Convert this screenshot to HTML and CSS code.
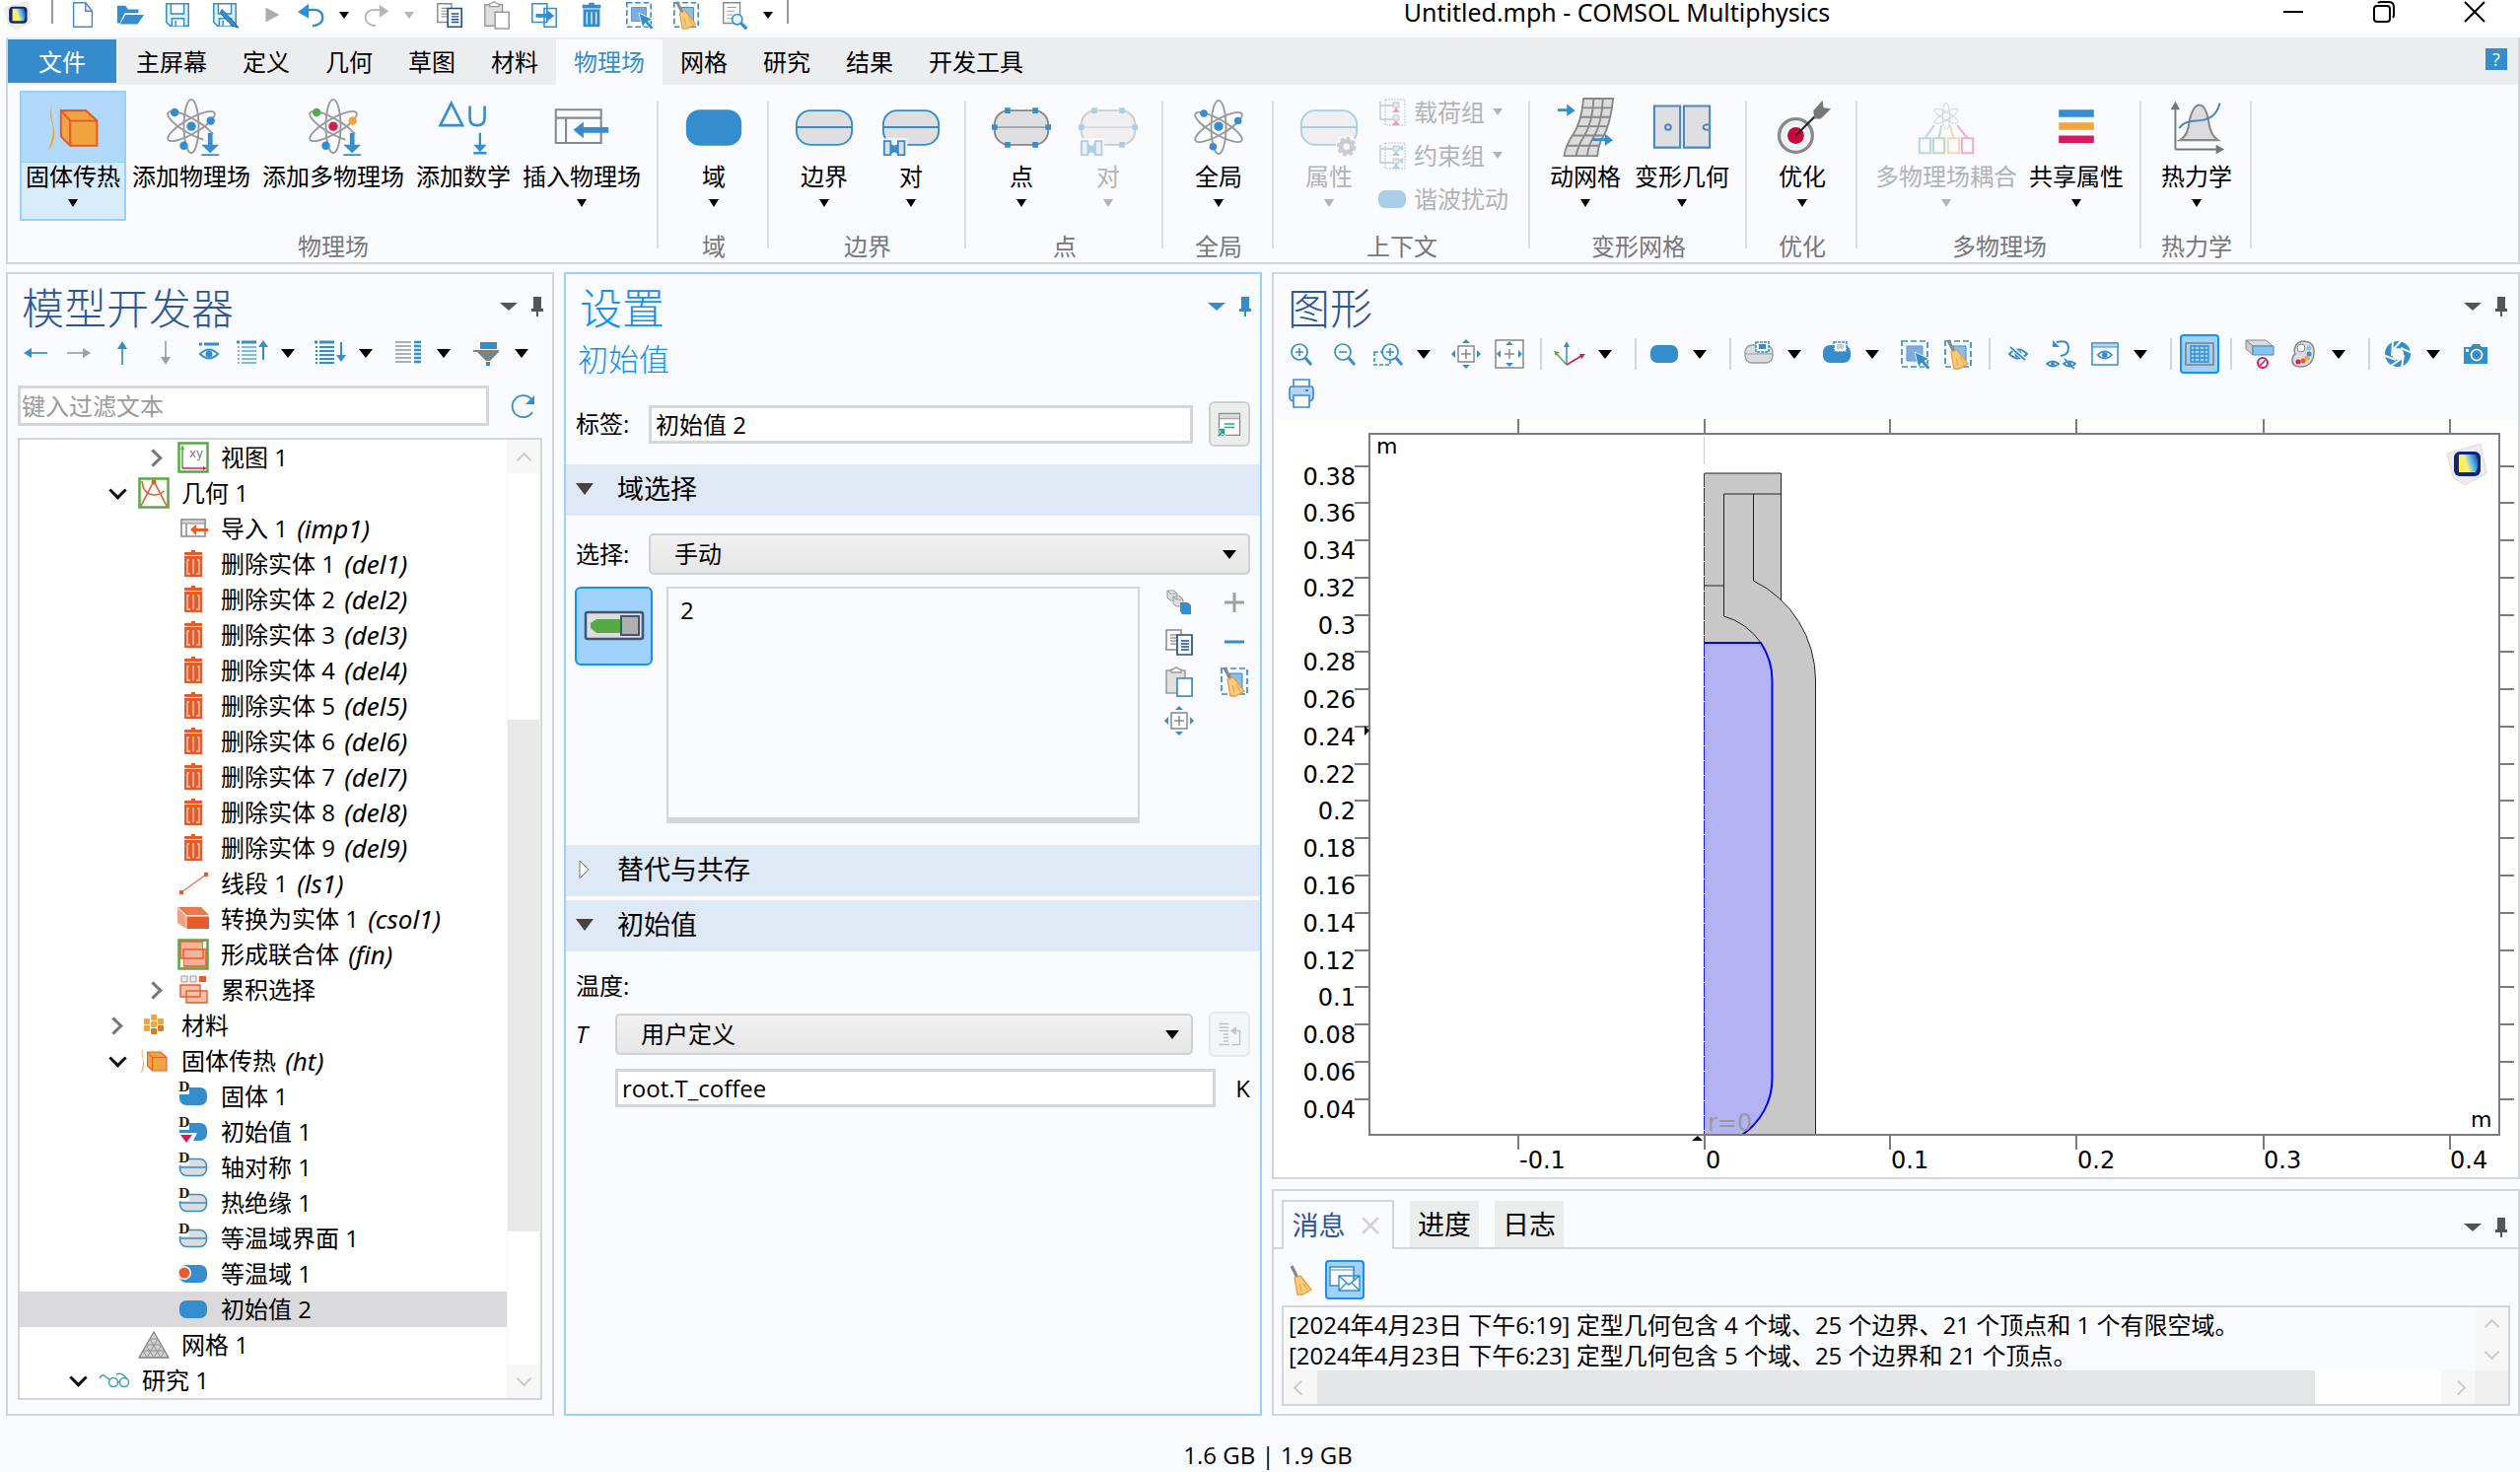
FILE: index.html
```html
<!DOCTYPE html>
<html lang="zh-CN">
<head>
<meta charset="utf-8">
<title>Untitled.mph - COMSOL Multiphysics</title>
<link rel="stylesheet" href="styles.css">
</head>
<body>
<svg class="sprite" aria-hidden="true">
  <defs>
    <linearGradient id="logoFill" x1="0" y1="0.3" x2="1" y2="0">
      <stop offset="0" stop-color="#fff04a"/><stop offset="0.3" stop-color="#f4f08a"/><stop offset="0.6" stop-color="#58b8e8"/><stop offset="1" stop-color="#1238a8"/>
    </linearGradient>
  </defs>
</svg>
<svg class="symbols" aria-hidden="true">
  <symbol id="logo" viewBox="0 0 44 44"><path d="M2 12 36 2l6 30-22 12L8 36z" fill="#ededed" stroke="#dadada"/><rect x="9" y="10" width="27" height="25" rx="6" fill="#10257e"/><path d="M14 13h17q5 9 0 18H14z" fill="url(#logoFill)"/></symbol>
  <symbol id="new" viewBox="0 0 32 32"><path d="M6 3h13l7 9v17H6zM19 3v9h7" fill="#fff" stroke="#4a86c4" stroke-width="1.5"/></symbol>
  <symbol id="open" viewBox="0 0 32 32"><path d="M2 6h9l3 4h11v4H10L5 25H2z M11 16h20l-7 10H5z" fill="#348dcd"/></symbol>
  <symbol id="save" viewBox="0 0 32 32"><path d="M4 4h24v24H8l-4-4z" fill="#dff0fc" stroke="#348dcd" stroke-width="1.6"/><path d="M9 4h14v11H9zM10 28v-8h13v8M14 22v6" fill="#fff" stroke="#348dcd" stroke-width="1.6"/></symbol>
  <symbol id="saveas" viewBox="0 0 32 32"><use href="#save"/><path d="m13 10 14 15 4 5-7-2-13-14z" fill="#348dcd" stroke="#1e68ab"/></symbol>
  <symbol id="play" viewBox="0 0 32 32"><path d="M9 8v16l15-8z" fill="#adadad"/></symbol>
  <symbol id="undo" viewBox="0 0 32 32"><path d="M8 12q20-5 20 7 0 8-11 9" fill="none" stroke="#348dcd" stroke-width="2.6"/><path d="m1 13 12-9v16z" fill="#348dcd"/></symbol>
  <symbol id="redo" viewBox="0 0 32 32"><path d="M24 12q-20-5-20 7 0 8 11 9" fill="none" stroke="#b4b4b4" stroke-width="2"/><path d="m29 12-10-7v14z" fill="#b4b4b4"/></symbol>
  <symbol id="copy" viewBox="0 0 32 32"><path d="M3 4h15v20H3z" fill="#fff" stroke="#888" stroke-width="1.5"/><path d="M7 9h8M7 12h8M7 15h8M7 18h8" stroke="#999" stroke-width="1.3"/><path d="M14 9h15v20H14z" fill="#fff" stroke="#1f4f8f" stroke-width="1.7"/><path d="M18 15h8M18 18h8M18 21h8M18 24h8" stroke="#1f4f8f" stroke-width="1.5"/></symbol>
  <symbol id="paste" viewBox="0 0 32 32"><path d="M3 5h19v23H3z" fill="#dfdfe0" stroke="#9a9a9a" stroke-width="1.5"/><path d="M8 7V4h2q3-4 6 0h2v3z" fill="#fff" stroke="#9a9a9a" stroke-width="1.3"/><path d="M14 13h15v18H14z" fill="#fff" stroke="#9a9a9a" stroke-width="1.6"/></symbol>
  <symbol id="pasteblue" viewBox="0 0 32 32"><use href="#paste"/><path d="M14 13h15v18H14z" fill="#fff" stroke="#348dcd" stroke-width="1.6"/></symbol>
  <symbol id="dup" viewBox="0 0 32 32"><path d="M3 4h16v20H3zM16 9h13v20H16z" fill="#fff" stroke="#348dcd" stroke-width="1.6"/><path d="M7 15h11v-5l9 7-9 7v-5H7z" fill="#348dcd"/></symbol>
  <symbol id="trash" viewBox="0 0 32 32"><path d="M13 3h6v2h7v4H6V5h7z" fill="#348dcd"/><path d="M7 10h18v19H7z" fill="#348dcd"/><path d="M11 13v13M16 13v13M21 13v13" stroke="#e4f1fa" stroke-width="1.5"/></symbol>
  <symbol id="selbox" viewBox="0 0 32 32"><path d="M3 3h26v26H3z" fill="none" stroke="#348dcd" stroke-width="1.7" stroke-dasharray="6 3"/><path d="M8 8h16v15H8z" fill="#7eaee0" stroke="#5c93cf"/><path d="m16 14 15 7-5 2 6 7-3 2-6-7-3 5z" fill="#348dcd" stroke="#fff" stroke-width=".8"/></symbol>
  <symbol id="broomonly" viewBox="0 0 32 32"><path d="m6 2 6 12" stroke="#888" stroke-width="3.2"/><path d="m9 14 6-2 11 14-9 5H12z" fill="#fecb82" stroke="#ef9d30" stroke-width="1.3"/><path d="m14 20 2 8m2-9 4 7" stroke="#ef9d30"/></symbol>
  <symbol id="broom" viewBox="0 0 32 32"><path d="M3 3h26v26H3z" fill="none" stroke="#348dcd" stroke-width="1.7" stroke-dasharray="6 3"/><path d="M11 8h13v15H11z" fill="#86c0ea" stroke="#348dcd"/><use href="#broomonly"/></symbol>
  <symbol id="docfind" viewBox="0 0 32 32"><path d="M5 3h18v22H5z" fill="#fff" stroke="#888" stroke-width="1.5"/><path d="M9 8h10M9 12h8M9 16h6M9 20h5" stroke="#999" stroke-width="1.3"/><circle cx="20" cy="21" r="5.5" fill="#e6f3fd" stroke="#348dcd" stroke-width="1.7"/><path d="m24 25 6 6" stroke="#348dcd" stroke-width="3.5"/></symbol>
  <symbol id="left" viewBox="0 0 32 32"><path d="M8 16h20" stroke="#348dcd" stroke-width="1.7"/><path d="m4 16 8-5v10z" fill="#348dcd"/></symbol>
  <symbol id="right" viewBox="0 0 32 32"><path d="M4 16h20" stroke="#a0a0a0" stroke-width="1.7"/><path d="m28 16-8-5v10z" fill="#a0a0a0"/></symbol>
  <symbol id="up" viewBox="0 0 32 32"><path d="M16 8v20" stroke="#348dcd" stroke-width="1.7"/><path d="m16 4-5 8h10z" fill="#348dcd"/></symbol>
  <symbol id="down" viewBox="0 0 32 32"><path d="M16 4v20" stroke="#a0a0a0" stroke-width="1.7"/><path d="m16 28-5-8h10z" fill="#a0a0a0"/></symbol>
  <symbol id="eye" viewBox="0 0 32 32"><path d="M7 15q9-9 18 0-9 9-18 0z" fill="none" stroke="#348dcd" stroke-width="2"/><circle cx="16" cy="15" r="3.5" fill="#348dcd"/></symbol>
  <symbol id="eyebar" viewBox="0 0 32 32"><path d="M6 7h3M11 7h15" stroke="#348dcd" stroke-width="3"/><g transform="translate(0 2)"><use href="#eye"/></g></symbol>
  <symbol id="listup" viewBox="0 0 32 32"><path d="M0 5h3M5 5h15" stroke="#348dcd" stroke-width="3"/><path d="M1 10h2M5 10h15M1 14h2M5 14h15M1 18h2M5 18h15M1 22h2M5 22h15M1 26h2M5 26h15" stroke="#7dbbe8" stroke-width="2"/><path d="M27 9v14" stroke="#348dcd" stroke-width="2"/><path d="m27 3-5 7h10z" fill="#348dcd"/></symbol>
  <symbol id="listdown" viewBox="0 0 32 32"><path d="M0 5h3M5 5h15" stroke="#348dcd" stroke-width="3"/><path d="M1 10h2M5 10h15M1 14h2M5 14h15M1 18h2M5 18h15M1 22h2M5 22h15M1 26h2M5 26h15" stroke="#348dcd" stroke-width="2"/><path d="M27 5v14" stroke="#348dcd" stroke-width="2"/><path d="m27 25-5-7h10z" fill="#348dcd"/></symbol>
  <symbol id="cols" viewBox="0 0 32 32"><path d="M3 5h16M3 9h16M3 13h16M3 17h16M3 21h16M3 25h16" stroke="#b0b0b0" stroke-width="2"/><path d="M22 5h7M22 9h7M22 13h7M22 17h7M22 21h7M22 25h7" stroke="#348dcd" stroke-width="2.4"/></symbol>
  <symbol id="filter" viewBox="0 0 32 32"><path d="M10 5h17v7H10z" fill="#348dcd"/><path d="M3 13h26v2l-9 9h-4l-9-9H3z" fill="#808184"/><path d="M16 25h4v4h-4z" fill="#348dcd"/></symbol>
  <symbol id="reload" viewBox="0 0 32 32"><path d="M25 9A11 11 0 1 0 26 22" fill="none" stroke="#348dcd" stroke-width="1.8"/><path d="M28 5v9h-9z" fill="#348dcd"/></symbol>
  <symbol id="pin" viewBox="0 0 16 24"><path d="M4 2h8v12h2v3H2v-3h2z" fill="currentColor"/><path d="M8 17v5" stroke="currentColor" stroke-width="2"/></symbol>

  <symbol id="view" viewBox="0 0 32 32"><path d="M1.500 1.500h29v29h-29z" fill="#fff" stroke="#56a946" stroke-width="2.500"/><path d="M5 27V6" stroke="#56a946" stroke-width="1.500"/><path d="m5 3-2 5h4z" fill="#56a946"/><path d="M5 27h22" stroke="#d81b60" stroke-width="1.500"/><path d="m30 27-4-2v4z" fill="#d81b60"/><text x="12" y="16" font-family="DejaVu Sans" font-size="12" fill="#777">xy</text></symbol>
  <symbol id="geom" viewBox="0 0 32 32"><path d="M1.500 1.500h29v29h-29z" fill="#fff" stroke="#56a946" stroke-width="2.500"/><path d="m3 29 13-25 13 25M4 4q1 13 12 14 8 0 10-4" fill="none" stroke="#e55c2c" stroke-width="1.600"/><circle cx="16" cy="5" r="2.500" fill="#e55c2c"/></symbol>
  <symbol id="imp" viewBox="0 0 32 32"><path d="M4 7h24v17H4z" fill="#fff" stroke="#888" stroke-width="1.600"/><path d="M4 7h24v4H4z" fill="#d5d5d5" stroke="#888"/><path d="M9 11v13" stroke="#888" stroke-width="1.500"/><path d="m13 17 6-5v4h12v3H19v4z" fill="#e55c2c"/></symbol>
  <symbol id="del" viewBox="0 0 32 32"><path d="M14 2h4v2h7v3H7V4h7zM7 8h18v21H7z" fill="#e55c2c"/><path d="M12 12h-2v14h3M16 11v15M20 12h2v14h-3" fill="none" stroke="#fbd3c2" stroke-width="1.300"/></symbol>
  <symbol id="line" viewBox="0 0 32 32"><path d="M4 25 29 7" stroke="#e9794f" stroke-width="1.500"/><path d="M2 23h4v4H2zM27 5h4v4h-4z" fill="#e55c2c"/></symbol>
  <symbol id="solid" viewBox="0 0 32 32"><path d="M0 4h24l8 8H9z" fill="#e9794f"/><path d="M0 4l9 9v13l-9-6z" fill="#f1a285"/><path d="M9 13h23v13H9z" fill="#e55c2c"/><path d="m0 4 9 9h23M9 13v13" fill="none" stroke="#fbd3c2" stroke-width="1.300"/></symbol>
  <symbol id="union" viewBox="0 0 32 32"><path d="M1.500 1.500h29v29h-29z" fill="#f9c7b2" stroke="#56a946" stroke-width="2.500"/><path d="M3 3h23v17H3zM6 11h23v17H6z" fill="#f3a98b" fill-opacity=".7" stroke="#e55c2c" stroke-width="1.400"/><path d="M26 3h3v7h-3zM3 21h3v8H3z" fill="#fff"/></symbol>
  <symbol id="cumul" viewBox="0 0 32 32"><path d="M4 2h6v6H4zM13 2h6v6h-6z" fill="#eee" stroke="#999"/><path d="M22 2h7v6h-7z" fill="#e55c2c"/><path d="M3 11h20v12H3zM9 17h21v12H9z" fill="#f5b59b" fill-opacity=".85" stroke="#e55c2c" stroke-width="1.400"/></symbol>
  <symbol id="mat" viewBox="0 0 32 32"><g fill="#f0a540"><rect x="6" y="9" width="6" height="6" rx="1"/><rect x="13" y="5" width="6" height="6" rx="1"/><rect x="20" y="9" width="6" height="6" rx="1"/><rect x="13" y="12" width="6" height="6" rx="1"/><rect x="6" y="16" width="6" height="6" rx="1"/></g><g fill="#d27f22"><rect x="13" y="19" width="6" height="6" rx="1"/><rect x="20" y="16" width="6" height="6" rx="1"/></g></symbol>
  <symbol id="heat" viewBox="0 0 64 64"><path d="M10 6q-5 10-1 20t-4 32q10-12 6-28t-1-24z" fill="#f0a540"/><path d="M19 14h27l12 11v27H29L19 42z" fill="#f0a540"/><path d="M19 14h27l12 11v27H29L19 42zM19 14l10 11h29M29 25v27" fill="none" stroke="#e55c2c" stroke-width="2.200"/></symbol>
  <symbol id="dom" viewBox="0 0 32 32"><rect x="2" y="7" width="28" height="18" rx="7" fill="#348dcd"/></symbol>
  <symbol id="dmark" viewBox="0 0 32 32"><path d="M0 0h12v14H0z" fill="#fff"/><text x="1" y="11" font-family="DejaVu Serif" font-weight="bold" font-size="13" fill="#222">D</text></symbol>
  <symbol id="domd" viewBox="0 0 32 32"><use href="#dom"/><use href="#dmark"/></symbol>
  <symbol id="initd" viewBox="0 0 32 32"><use href="#dom"/><use href="#dmark"/><path d="M0 17h20l-5 10H0z" fill="#fff"/><path d="M3 19h12l-6 8z" fill="#d81b60"/></symbol>
  <symbol id="bndd" viewBox="0 0 32 32"><rect x="2.500" y="7.500" width="27" height="17" rx="7" fill="#dcdcde" stroke="#348dcd" stroke-width="1.500"/><path d="M3 16h26" stroke="#348dcd" stroke-width="1.500"/><use href="#dmark"/></symbol>
  <symbol id="iso" viewBox="0 0 32 32"><use href="#dom"/><circle cx="7" cy="15" r="7" fill="#fff"/><circle cx="7" cy="15" r="5.500" fill="#e55c2c"/></symbol>
  <symbol id="mesh" viewBox="0 0 32 32"><path d="M16 3 31 29H1z" fill="#d2d2d4" stroke="#808080" stroke-width="1.300"/><path d="M12 10h8M8 16h16M5 22h22M12 10l11 19M8 16l8 13M5 22l4 7M20 10 9 29M24 16l-8 13M27 22l-4 7" stroke="#909090" stroke-width="1"/></symbol>
  <symbol id="study" viewBox="0 0 32 32"><circle cx="15" cy="18" r="4.500" fill="none" stroke="#3aa3b8" stroke-width="1.500"/><circle cx="26" cy="18" r="4.500" fill="none" stroke="#3aa3b8" stroke-width="1.500"/><path d="M1 14q3-6 7-1l4 3M18 10q6-3 11 5M19 18h3" fill="none" stroke="#3aa3b8" stroke-width="1.500"/></symbol>

  <symbol id="atom" viewBox="0 0 64 64"><g fill="none" stroke="#999" stroke-width="2"><ellipse cx="32" cy="32" rx="8" ry="29"/><ellipse cx="32" cy="32" rx="8" ry="29" transform="rotate(60 32 32)"/><ellipse cx="32" cy="32" rx="8" ry="29" transform="rotate(-60 32 32)"/></g></symbol>
  <symbol id="arrdown" viewBox="0 0 64 64"><path d="M45 40h15v24H45z" fill="#fafbff" opacity=".85"/><path d="M50 39h5v13h7l-9.500 9-9.500-9h7zM43 62h19v2H43z" fill="#348dcd"/></symbol>
  <symbol id="physics" viewBox="0 0 64 66"><use href="#atom" width="64" height="64"/><g fill="#348dcd"><circle cx="32" cy="32" r="5"/><circle cx="14" cy="17" r="4.500"/><circle cx="53" cy="26" r="4.500"/><circle cx="24" cy="53" r="4.500"/></g><use href="#arrdown" width="64" height="64"/></symbol>
  <symbol id="multi" viewBox="0 0 64 66"><use href="#atom" width="64" height="64"/><circle cx="32" cy="32" r="5" fill="#d81b50"/><circle cx="14" cy="17" r="4.500" fill="#56a946"/><circle cx="53" cy="26" r="4.500" fill="#f0a540"/><circle cx="24" cy="53" r="4.500" fill="#348dcd"/><use href="#arrdown" width="64" height="64"/></symbol>
  <symbol id="global" viewBox="0 0 64 64"><use href="#atom"/><g fill="#348dcd"><circle cx="32" cy="31" r="5"/><circle cx="16" cy="17" r="4"/><circle cx="53" cy="25" r="4"/><circle cx="26" cy="53" r="4"/></g></symbol>
  <symbol id="math" viewBox="0 0 64 64"><path d="M7 30 19 6l12 24zM39 9v13q0 8 8 8t8-8V9" fill="none" stroke="#348dcd" stroke-width="2.800"/><path d="M50 38v18M43 60h14" stroke="#348dcd" stroke-width="2.500"/><path d="m50 59-7-8h14z" fill="#348dcd"/></symbol>
  <symbol id="insert" viewBox="0 0 64 64"><path d="M4 13h49v36H4zM4 22h49M15 22v27" fill="none" stroke="#888" stroke-width="2.200"/><path d="m23 35 11-9v6h27v6H34v6z" fill="#348dcd"/></symbol>
  <symbol id="bigdom" viewBox="0 0 64 64"><rect x="2" y="13" width="60" height="39" rx="15" fill="#348dcd"/></symbol>
  <symbol id="bnd" viewBox="0 0 64 64"><rect x="2" y="14" width="60" height="37" rx="15" fill="#dfdfe1" stroke="#348dcd" stroke-width="2"/><path d="M2 32h60" stroke="#348dcd" stroke-width="2"/></symbol>
  <symbol id="pairmark" viewBox="0 0 64 64"><path d="M0 44h28v22H0z" fill="#fafbff"/><path d="M3 47h7v15H3zM18 47h7v15h-7z" fill="#dfdfe1" stroke="#348dcd" stroke-width="2"/><path d="M10 50l4 2 4-2v11l-4-2-4 2z" fill="#348dcd"/></symbol>
  <symbol id="bndpair" viewBox="0 0 64 64"><use href="#bnd"/><use href="#pairmark"/></symbol>
  <symbol id="pt" viewBox="0 0 64 64"><rect x="3" y="14" width="58" height="37" rx="15" fill="#dfdfe1" stroke="#888" stroke-width="2"/><path d="M3 32h58" stroke="#999" stroke-width="1.500"/><path d="M14 11h6v6h-6zM44 11h6v6h-6zM14 48h6v6h-6zM44 48h6v6h-6zM0 29h6v6H0zM58 29h6v6h-6z" fill="#348dcd"/></symbol>
  <symbol id="ptpair" viewBox="0 0 64 64"><use href="#pt"/><use href="#pairmark"/></symbol>
  <symbol id="attr" viewBox="0 0 64 64"><use href="#bnd"/><circle cx="51" cy="53" r="12" fill="#fafbff"/><circle cx="51" cy="53" r="6" fill="none" stroke="#888" stroke-width="5"/><circle cx="51" cy="53" r="9" fill="none" stroke="#888" stroke-width="3" stroke-dasharray="4 3"/></symbol>
  <symbol id="loadg" viewBox="0 0 32 32"><path d="M9 3h20v26H9z" fill="none" stroke="#777" stroke-dasharray="2 1"/><path d="M4 5v18h13M4 9h13" fill="none" stroke="#777" stroke-width="1.300"/><path d="M17 6h6v5h-6zM17 19h6v5h-6z" fill="#ccc" stroke="#777"/><path d="m20 11-4 5h8zM20 24l-4 5h8z" fill="#d81b60"/></symbol>
  <symbol id="consg" viewBox="0 0 32 32"><path d="M9 3h20v26H9z" fill="none" stroke="#777" stroke-dasharray="2 1"/><path d="M4 5v18h13M4 9h13" fill="none" stroke="#777" stroke-width="1.300"/><path d="M17 6h6v5h-6zM17 19h6v5h-6z" fill="#ccc" stroke="#777"/><path d="m20 11-4 5h8zM20 24l-4 5h8zM23 8l4-3v6zM23 21l4-3v6z" fill="#348dcd"/></symbol>
  <symbol id="moving" viewBox="0 0 64 64"><path d="M30 1h32q-3 30-13 45-3 7-4 17H9q2-12 9-22 10-14 12-40z" fill="#dcdcdc" stroke="#888" stroke-width="2"/><path d="M41 1q-1 26-11 42-6 9-8 20M51 1q-1 26-10 42-6 9-7 20M29 11h32M27 21h32M23 31h33M18 41h33M12 52h34" fill="none" stroke="#888" stroke-width="2"/><path d="M2 12h10V7l9 7-9 6v-5H2zM40 44h13v-5l9 7-9 6v-5H40z" fill="#348dcd"/></symbol>
  <symbol id="deform" viewBox="0 0 64 64"><path d="M2 9h28v45H2zM34 9h28v45H34z" fill="#dfdfe1" stroke="#4a86c4" stroke-width="2.200"/><circle cx="17" cy="32" r="3" fill="none" stroke="#4a86c4" stroke-width="2.200"/><path d="M61 29q-6 0-6 3t6 3" fill="none" stroke="#4a86c4" stroke-width="2.200"/></symbol>
  <symbol id="opt" viewBox="0 0 64 64"><circle cx="25" cy="41" r="18" fill="none" stroke="#888" stroke-width="3.500"/><circle cx="25" cy="41" r="13" fill="none" stroke="#eee" stroke-width="3"/><circle cx="25" cy="41" r="9" fill="#c8073f"/><path d="M25 41 50 16" stroke="#222" stroke-width="2.200"/><path d="m44 14 10-11 1 8 8 1-11 11h-7z" fill="#777"/></symbol>
  <symbol id="coupling" viewBox="0 0 64 64"><g transform="translate(16 4) scale(.5)"><use href="#atom" width="64" height="64"/></g><g fill="none" stroke-width="2.200"><path d="M3 44h12v16H3zM9 44l10-14" stroke="#6d97d2"/><path d="M18 44h12v16H18zM24 44l3-14" stroke="#65b058"/><path d="M34 44h12v16H34zM40 44l-4-14" stroke="#f0a540"/><path d="M49 44h12v16H49zM55 44 44 30" stroke="#dc3ba0"/></g></symbol>
  <symbol id="shared" viewBox="0 0 64 64"><path d="M13 13h38v8H13z" fill="#348dcd"/><path d="M13 27h38v8H13z" fill="#f0a540"/><path d="M13 41h38v8H13z" fill="#d81b60"/></symbol>
  <symbol id="thermo" viewBox="0 0 64 64"><path d="M15 42q9-5 10-20 4-18 11-18t10 18q2 15 10 20z" transform="translate(-1 4)" fill="#dcdcde" stroke="#888" stroke-width="2.200"/><path d="M9 56V10M9 56h46" stroke="#777" stroke-width="2"/><path d="m9 4-5 9h10zM62 56l-9-5v10z" fill="#777"/><path d="M13 33q6-8 18-8 22 0 26-19" fill="none" stroke="#4a86c4" stroke-width="2.200"/></symbol>

  <symbol id="rename" viewBox="0 0 32 32"><path d="M4 4h24v25H4z" fill="#fff" stroke="#888" stroke-width="1.500"/><path d="M4 4h24v6H4z" fill="#d8d8d9" stroke="#888"/><path d="M10 16h12M10 20h12" stroke="#1aab8b" stroke-width="1.500"/><path d="M1 21h10v9l-3-3-4 4-2-2 4-4z" fill="#1aab8b" stroke="#fff" stroke-width=".7"/></symbol>
  <symbol id="reset" viewBox="0 0 32 32"><path d="M4 4h11M4 8h11M4 12h11M9 16h6M9 20h6M9 24h6M4 28h12M19 28h9V12h-6" fill="none" stroke="#888" stroke-width="1.700"/><path d="m17 12 7-5v10z" fill="#888"/></symbol>
  <symbol id="toggle" viewBox="0 0 64 64"><rect x="3" y="18" width="58" height="27" rx="2" fill="#ddddde" stroke="#3e5672" stroke-width="2.500"/><path d="M38 25H14l-6 4v5l6 5h24z" fill="#56a946"/><rect x="39" y="22" width="18" height="19" fill="#b0b0b0" stroke="#3e5672" stroke-width="2"/></symbol>
  <symbol id="cubes" viewBox="0 0 32 32"><g fill="#ddd" stroke="#999"><path d="M4 4h7l3 3v7H7l-3-3zM4 4l3 3h7"/><path d="M10 10h7l3 3v7h-7l-3-3zM10 10l3 3h7"/></g><path d="M17 16h8l3 3v9h-9l-2-3z" fill="#348dcd"/></symbol>
  <symbol id="plus" viewBox="0 0 32 32"><path d="M16 6v20M6 16h20" stroke="#a0a0a0" stroke-width="3"/></symbol>
  <symbol id="minus" viewBox="0 0 32 32"><path d="M6 16h20" stroke="#348dcd" stroke-width="3"/></symbol>
  <symbol id="extents" viewBox="0 0 32 32"><path d="M8 8h16v16H8z" fill="#fff" stroke="#888" stroke-width="1.500"/><path d="M11 16h10M16 11v10" stroke="#888" stroke-width="1.500"/><path d="m16 1-4 4h8zM16 31l-4-4h8zM1 16l4-4v8zM31 16l-4-4v8z" fill="#348dcd"/></symbol>
  <symbol id="zoomsel" viewBox="0 0 32 32"><path d="M2 2h28v28H2z" fill="#fff" stroke="#888" stroke-width="1.500"/><path d="M11 16h10M16 11v10" stroke="#888" stroke-width="1.500"/><path d="m16 3-4 4h8zM16 29l-4-4h8zM3 16l4-4v8zM29 16l-4-4v8z" fill="#348dcd"/></symbol>
  <symbol id="zin" viewBox="0 0 32 32"><circle cx="14" cy="14" r="8" fill="#fff" stroke="#348dcd" stroke-width="1.700"/><path d="M10 14h8M14 10v8" stroke="#348dcd" stroke-width="1.600"/><path d="m20 20 6 7" stroke="#348dcd" stroke-width="3"/></symbol>
  <symbol id="zout" viewBox="0 0 32 32"><circle cx="14" cy="14" r="8" fill="#fff" stroke="#348dcd" stroke-width="1.700"/><path d="M10 14h8" stroke="#348dcd" stroke-width="1.600"/><path d="m20 20 6 7" stroke="#348dcd" stroke-width="3"/></symbol>
  <symbol id="zbox" viewBox="0 0 32 32"><path d="M2 14h16v13H2z" fill="none" stroke="#348dcd" stroke-width="1.600" stroke-dasharray="4 2"/><circle cx="18" cy="14" r="8" fill="#fff" stroke="#348dcd" stroke-width="1.700"/><path d="M14 14h8M18 10v8" stroke="#348dcd" stroke-width="1.600"/><path d="m24 20 6 7" stroke="#348dcd" stroke-width="3"/></symbol>
  <symbol id="axes" viewBox="0 0 32 32"><path d="M13 27V7" stroke="#348dcd" stroke-width="1.500"/><path d="m13 3-3 6h6z" fill="#348dcd"/><path d="M13 27 3 16" stroke="#56a946" stroke-width="1.500"/><path d="m0 13 6 1-4 4z" fill="#56a946"/><path d="m13 27 15-9" stroke="#d81b60" stroke-width="1.500"/><path d="m32 16-4 5-2-5z" fill="#d81b60"/></symbol>
  <symbol id="bndsel" viewBox="0 0 32 32"><rect x="2" y="7" width="28" height="18" rx="7" fill="#dcdcde" stroke="#999" stroke-width="1.300"/><path d="M2 16h28" stroke="#999"/><path d="M13 4h13v10H13z" fill="#fff" stroke="#348dcd" stroke-width="1.500" stroke-dasharray="3 1"/><path d="M16 6h7v5h-7z" fill="#348dcd"/></symbol>
  <symbol id="domsel" viewBox="0 0 32 32"><rect x="2" y="7" width="28" height="18" rx="7" fill="#348dcd"/><path d="M13 4h13v10H13z" fill="#fff" stroke="#348dcd" stroke-width="1.500" stroke-dasharray="3 1"/><path d="M16 6h7v5h-7z" fill="#ccc"/></symbol>
  <symbol id="hide" viewBox="0 0 32 32"><g transform="translate(0 1)"><use href="#eye"/></g><path d="M9 9l14 13" stroke="#fafbff" stroke-width="4"/><path d="m8 9 15 13" stroke="#348dcd" stroke-width="1.700"/></symbol>
  <symbol id="resethide" viewBox="0 0 32 32"><path d="M11 4q12-3 12 6 0 7-8 8" fill="none" stroke="#348dcd" stroke-width="2"/><path d="M7 2v7h7z" fill="#348dcd"/><path d="M1 26q6-5 12 0-6 5-12 0zM18 26q6-5 12 0-6 5-12 0zM19 21l10 10" fill="none" stroke="#348dcd" stroke-width="1.700"/><circle cx="7" cy="26" r="2" fill="#348dcd"/><circle cx="24" cy="26" r="2" fill="#348dcd"/></symbol>
  <symbol id="viewwin" viewBox="0 0 32 32"><path d="M3 5h26v22H3z" fill="#fff" stroke="#348dcd" stroke-width="1.500"/><path d="M3 5h26v4H3z" fill="#bcd5ee" stroke="#348dcd"/><g transform="translate(3 5) scale(.8)"><use href="#eye" width="32" height="32"/></g></symbol>
  <symbol id="grid" viewBox="0 0 32 32"><path d="M2 5h28v22H2z" fill="none" stroke="#808080" stroke-width="1.600"/><path d="M7 8h18v16H7zM7 12h18M7 16h18M7 20h18M11 8v16M16 8v16M21 8v16" fill="none" stroke="#348dcd" stroke-width="1.300"/></symbol>
  <symbol id="clip" viewBox="0 0 32 32"><path d="M2 2h20l7 6H9z" fill="#ddd" stroke="#888"/><path d="M2 2l7 6v9l-7-6z" fill="#ccc" stroke="#888"/><path d="M9 8h21v9H9z" fill="#86c4ee" stroke="#348dcd"/><circle cx="19" cy="25" r="5" fill="none" stroke="#d81b60" stroke-width="2"/><path d="m16 28 6-6" stroke="#d81b60" stroke-width="1.600"/></symbol>
  <symbol id="palette" viewBox="0 0 32 32"><path d="M17 3q11 1 10 12-1 14-14 14-9 0-8-8 1-4 3-5-2-4 1-9 3-4 8-4z" fill="#dcdcde" stroke="#888" stroke-width="1.500"/><circle cx="14" cy="10" r="4" fill="#fff" stroke="#888"/><circle cx="22" cy="10" r="2.500" fill="#86c4ee"/><circle cx="22" cy="16" r="2.500" fill="#348dcd"/><circle cx="20" cy="20" r="2.500" fill="#f0a540"/><circle cx="16" cy="23" r="2.500" fill="#e55c2c"/><circle cx="11" cy="24" r="2.500" fill="#d81b60"/></symbol>
  <symbol id="aperture" viewBox="0 0 32 32"><circle cx="16" cy="16" r="9.500" fill="none" stroke="#348dcd" stroke-width="7"/><path d="M10 13 20 2M19 10l12 5M22 17l-2 13M21 20 9 28M14 22 1 17M10 18 11 3" stroke="#fafbff" stroke-width="2"/></symbol>
  <symbol id="camera" viewBox="0 0 32 32"><path d="M4 9h7l2-3h7l2 3h6v17H4z" fill="#348dcd"/><circle cx="17" cy="17" r="5.500" fill="none" stroke="#fff" stroke-width="1.700"/><path d="M6 11h3v3H6z" fill="#fff"/></symbol>
  <symbol id="print" viewBox="0 0 32 32"><path d="M8 2h16v8H8z" fill="#fff" stroke="#348dcd" stroke-width="1.600"/><path d="M6 9h20q2 0 2 3v8q0 3-4 4H8q-4-1-4-4v-8q0-3 2-3z" fill="#bcd3ee" stroke="#348dcd" stroke-width="1.600"/><path d="M8 18h16v12H8z" fill="#fff" stroke="#348dcd" stroke-width="1.600"/><path d="M20 12h3v2h-3z" fill="#348dcd"/></symbol>
  <symbol id="mail" viewBox="0 0 32 32"><path d="M1 3h24v19H1z" fill="#fff" stroke="#348dcd" stroke-width="1.500"/><path d="M1 6h24" stroke="#348dcd"/><path d="M10 12h21v15H10zl10 9 11-9M10 27l8-8M31 27l-8-8" fill="#fff" stroke="#348dcd" stroke-width="1.400"/></symbol>
  <symbol id="tridown" viewBox="0 0 18 20"><path d="M0 4h18L9 16z" fill="#444"/></symbol>
  <symbol id="triright" viewBox="0 0 18 20"><path d="M4 1v18l9-9z" fill="#fff" stroke="#777"/></symbol>
</svg>

<header class="titlebar">
  <svg class="app-logo"><use href="#logo"/></svg>
  <span class="qsep"></span>
  <button class="q" aria-label="新建"><svg><use href="#new"/></svg></button>
  <button class="q" aria-label="打开"><svg><use href="#open"/></svg></button>
  <button class="q" aria-label="保存"><svg><use href="#save"/></svg></button>
  <button class="q" aria-label="另存为"><svg><use href="#saveas"/></svg></button>
  <button class="q" aria-label="运行"><svg><use href="#play"/></svg></button>
  <button class="q narrow" aria-label="撤消"><svg><use href="#undo"/></svg></button>
  <button class="qc" aria-label="撤消列表"><i class="caret"></i></button>
  <button class="q narrow" aria-label="重做"><svg><use href="#redo"/></svg></button>
  <button class="qc dim" aria-label="重做列表"><i class="caret"></i></button>
  <button class="q" aria-label="复制"><svg><use href="#copy"/></svg></button>
  <button class="q" aria-label="粘贴"><svg><use href="#paste"/></svg></button>
  <button class="q" aria-label="生成副本"><svg><use href="#dup"/></svg></button>
  <button class="q" aria-label="删除"><svg><use href="#trash"/></svg></button>
  <button class="q" aria-label="选择"><svg><use href="#selbox"/></svg></button>
  <button class="q" aria-label="清除选择"><svg><use href="#broom"/></svg></button>
  <button class="q" aria-label="查找"><svg><use href="#docfind"/></svg></button>
  <button class="qc small" aria-label="更多"><i class="caret"></i></button>
  <span class="qsep"></span>
  <h1 class="doc-title">Untitled.mph - COMSOL Multiphysics</h1>
  <div class="winbtns">
    <button aria-label="最小化"><svg viewBox="0 0 24 24"><path d="M2 12h20"/></svg></button>
    <button aria-label="还原"><svg viewBox="0 0 24 24"><rect x="2" y="6" width="16" height="16" rx="3"/><path d="M6 3q1-1 3-1h8q5 0 5 5v8q0 2-1 3"/></svg></button>
    <button aria-label="关闭"><svg viewBox="0 0 24 24"><path d="m2 2 20 20M22 2 2 22"/></svg></button>
  </div>
</header>

<section class="ribbon">
  <nav class="tabs">
    <button class="file">文件</button>
    <button>主屏幕</button><button>定义</button><button>几何</button><button>草图</button><button>材料</button><button class="on">物理场</button><button>网格</button><button>研究</button><button>结果</button><button>开发工具</button>
    <button class="help" aria-label="帮助"><span>?</span></button>
  </nav>
  <div class="groups">
    <div class="group">
      <div class="btns">
        <button class="rb on"><span class="ic"><svg><use href="#heat"/></svg></span><span>固体传热</span><i class="caret"></i></button>
        <button class="rb"><span class="ic"><svg><use href="#physics"/></svg></span><span>添加物理场</span></button>
        <button class="rb"><span class="ic"><svg><use href="#multi"/></svg></span><span>添加多物理场</span></button>
        <button class="rb"><span class="ic"><svg><use href="#math"/></svg></span><span>添加数学</span></button>
        <button class="rb"><span class="ic"><svg><use href="#insert"/></svg></span><span>插入物理场</span><i class="caret"></i></button>
      </div>
      <div class="gl">物理场</div>
    </div>
    <div class="group">
      <div class="btns"><button class="rb"><span class="ic"><svg><use href="#bigdom"/></svg></span><span>域</span><i class="caret"></i></button></div>
      <div class="gl">域</div>
    </div>
    <div class="group">
      <div class="btns">
        <button class="rb"><span class="ic"><svg><use href="#bnd"/></svg></span><span>边界</span><i class="caret"></i></button>
        <button class="rb"><span class="ic"><svg><use href="#bndpair"/></svg></span><span>对</span><i class="caret"></i></button>
      </div>
      <div class="gl">边界</div>
    </div>
    <div class="group">
      <div class="btns">
        <button class="rb"><span class="ic"><svg><use href="#pt"/></svg></span><span>点</span><i class="caret"></i></button>
        <button class="rb" disabled><span class="ic"><svg><use href="#ptpair"/></svg></span><span>对</span><i class="caret"></i></button>
      </div>
      <div class="gl">点</div>
    </div>
    <div class="group">
      <div class="btns"><button class="rb"><span class="ic"><svg><use href="#global"/></svg></span><span>全局</span><i class="caret"></i></button></div>
      <div class="gl">全局</div>
    </div>
    <div class="group">
      <div class="btns">
        <button class="rb" disabled><span class="ic"><svg><use href="#attr"/></svg></span><span>属性</span><i class="caret"></i></button>
        <div class="stack">
          <button disabled><svg><use href="#loadg"/></svg><span>载荷组</span><i class="caret"></i></button>
          <button disabled><svg><use href="#consg"/></svg><span>约束组</span><i class="caret"></i></button>
          <button disabled><svg><use href="#dom"/></svg><span>谐波扰动</span></button>
        </div>
      </div>
      <div class="gl">上下文</div>
    </div>
    <div class="group">
      <div class="btns">
        <button class="rb"><span class="ic"><svg><use href="#moving"/></svg></span><span>动网格</span><i class="caret"></i></button>
        <button class="rb"><span class="ic"><svg><use href="#deform"/></svg></span><span>变形几何</span><i class="caret"></i></button>
      </div>
      <div class="gl">变形网格</div>
    </div>
    <div class="group">
      <div class="btns"><button class="rb"><span class="ic"><svg><use href="#opt"/></svg></span><span>优化</span><i class="caret"></i></button></div>
      <div class="gl">优化</div>
    </div>
    <div class="group">
      <div class="btns">
        <button class="rb" disabled><span class="ic"><svg><use href="#coupling"/></svg></span><span>多物理场耦合</span><i class="caret"></i></button>
        <button class="rb"><span class="ic"><svg><use href="#shared"/></svg></span><span>共享属性</span><i class="caret"></i></button>
      </div>
      <div class="gl">多物理场</div>
    </div>
    <div class="group">
      <div class="btns"><button class="rb"><span class="ic"><svg><use href="#thermo"/></svg></span><span>热力学</span><i class="caret"></i></button></div>
      <div class="gl">热力学</div>
    </div>
  </div>
</section>

<main class="work">
  <section class="panel builder">
    <div class="phead"><h2>模型开发器</h2><button class="pm" aria-label="面板菜单"><i class="caret"></i></button><button class="pm" aria-label="固定"><svg class="pinicon"><use href="#pin"/></svg></button></div>
    <div class="tools">
      <button class="t" aria-label="上一个"><svg><use href="#left"/></svg></button>
      <button class="t" aria-label="下一个"><svg><use href="#right"/></svg></button>
      <button class="t" aria-label="上移"><svg><use href="#up"/></svg></button>
      <button class="t" aria-label="下移"><svg><use href="#down"/></svg></button>
      <button class="t" aria-label="显示"><svg><use href="#eyebar"/></svg></button>
      <button class="t" aria-label="折叠"><svg><use href="#listup"/></svg></button><button class="tc" aria-label="折叠选项"><i class="caret"></i></button>
      <button class="t" aria-label="展开"><svg><use href="#listdown"/></svg></button><button class="tc" aria-label="展开选项"><i class="caret"></i></button>
      <button class="t" aria-label="节点文本"><svg><use href="#cols"/></svg></button><button class="tc" aria-label="文本选项"><i class="caret"></i></button>
      <button class="t" aria-label="筛选"><svg><use href="#filter"/></svg></button><button class="tc" aria-label="筛选选项"><i class="caret"></i></button>
    </div>
    <div class="filter"><input type="text" placeholder="键入过滤文本" aria-label="键入过滤文本"><button aria-label="刷新"><svg><use href="#reload"/></svg></button></div>
    <div class="treebox">
      <ul class="tree">
        <li class="l3 closed"><svg><use href="#view"/></svg>视图 1</li>
        <li class="l2 opened"><svg><use href="#geom"/></svg>几何 1</li>
        <li class="l3"><svg><use href="#imp"/></svg>导入 1 <em>(imp1)</em></li>
        <li class="l3"><svg><use href="#del"/></svg>删除实体 1 <em>(del1)</em></li>
        <li class="l3"><svg><use href="#del"/></svg>删除实体 2 <em>(del2)</em></li>
        <li class="l3"><svg><use href="#del"/></svg>删除实体 3 <em>(del3)</em></li>
        <li class="l3"><svg><use href="#del"/></svg>删除实体 4 <em>(del4)</em></li>
        <li class="l3"><svg><use href="#del"/></svg>删除实体 5 <em>(del5)</em></li>
        <li class="l3"><svg><use href="#del"/></svg>删除实体 6 <em>(del6)</em></li>
        <li class="l3"><svg><use href="#del"/></svg>删除实体 7 <em>(del7)</em></li>
        <li class="l3"><svg><use href="#del"/></svg>删除实体 8 <em>(del8)</em></li>
        <li class="l3"><svg><use href="#del"/></svg>删除实体 9 <em>(del9)</em></li>
        <li class="l3"><svg><use href="#line"/></svg>线段 1 <em>(ls1)</em></li>
        <li class="l3"><svg><use href="#solid"/></svg>转换为实体 1 <em>(csol1)</em></li>
        <li class="l3"><svg><use href="#union"/></svg>形成联合体 <em>(fin)</em></li>
        <li class="l3 closed"><svg><use href="#cumul"/></svg>累积选择</li>
        <li class="l2 closed"><svg><use href="#mat"/></svg>材料</li>
        <li class="l2 opened"><svg><use href="#heat"/></svg>固体传热 <em>(ht)</em></li>
        <li class="l3"><svg><use href="#domd"/></svg>固体 1</li>
        <li class="l3"><svg><use href="#initd"/></svg>初始值 1</li>
        <li class="l3"><svg><use href="#bndd"/></svg>轴对称 1</li>
        <li class="l3"><svg><use href="#bndd"/></svg>热绝缘 1</li>
        <li class="l3"><svg><use href="#bndd"/></svg>等温域界面 1</li>
        <li class="l3"><svg><use href="#iso"/></svg>等温域 1</li>
        <li class="l3 sel"><svg><use href="#dom"/></svg>初始值 2</li>
        <li class="l2"><svg><use href="#mesh"/></svg>网格 1</li>
        <li class="l1 opened"><svg><use href="#study"/></svg>研究 1</li>
      </ul>
      <div class="vbar"><span class="sb"><i class="chev up"></i></span><span class="track before"></span><span class="thumb"></span><span class="track after"></span><span class="sb"><i class="chev down"></i></span></div>
    </div>
  </section>

  <section class="panel settings">
    <div class="phead"><h2>设置</h2><button class="pm" aria-label="面板菜单"><i class="caret"></i></button><button class="pm" aria-label="固定"><svg class="pinicon"><use href="#pin"/></svg></button></div>
    <h3 class="subtitle">初始值</h3>
    <div class="row labelrow"><label for="lbl">标签:</label><input id="lbl" type="text" value="初始值 2"><button class="sq" aria-label="重命名"><svg><use href="#rename"/></svg></button></div>
    <button class="sec"><svg><use href="#tridown"/></svg>域选择</button>
    <div class="row selrow"><label for="seltype">选择:</label><select id="seltype"><option>手动</option></select></div>
    <div class="row listrow">
      <button class="activate" aria-label="激活选择"><svg><use href="#toggle"/></svg></button>
      <div class="list" role="listbox" aria-label="选择"><div role="option">2</div></div>
      <div class="listtools">
        <button aria-label="创建选择"><svg><use href="#cubes"/></svg></button><button aria-label="添加"><svg><use href="#plus"/></svg></button>
        <button aria-label="复制选择"><svg><use href="#copy"/></svg></button><button aria-label="移除"><svg><use href="#minus"/></svg></button>
        <button aria-label="粘贴选择"><svg><use href="#pasteblue"/></svg></button><button aria-label="清除选择"><svg><use href="#broom"/></svg></button>
        <button aria-label="缩放到选择"><svg><use href="#extents"/></svg></button>
      </div>
    </div>
    <button class="sec"><svg><use href="#triright"/></svg>替代与共存</button>
    <button class="sec next"><svg><use href="#tridown"/></svg>初始值</button>
    <div class="row temp">温度:</div>
    <div class="row trow"><label for="tsel"><em>T</em></label><select id="tsel"><option>用户定义</option></select><button class="sq" disabled aria-label="重置"><svg><use href="#reset"/></svg></button></div>
    <div class="row valrow"><input type="text" value="root.T_coffee" aria-label="温度"><span>K</span></div>
  </section>

  <div class="right">
    <section class="panel graphics">
      <div class="phead"><h2>图形</h2><button class="pm" aria-label="面板菜单"><i class="caret"></i></button><button class="pm" aria-label="固定"><svg class="pinicon"><use href="#pin"/></svg></button></div>
      <div class="tools gtools">
        <button class="t" aria-label="放大"><svg><use href="#zin"/></svg></button>
        <button class="t" aria-label="缩小"><svg><use href="#zout"/></svg></button>
        <button class="t" aria-label="框选缩放"><svg><use href="#zbox"/></svg></button><button class="tc" aria-label="缩放选项"><i class="caret"></i></button>
        <button class="t" aria-label="缩放到窗口"><svg><use href="#extents"/></svg></button>
        <button class="t" aria-label="缩放到选定"><svg><use href="#zoomsel"/></svg></button>
        <span class="tsep"></span>
        <button class="t" aria-label="视图"><svg><use href="#axes"/></svg></button><button class="tc" aria-label="视图选项"><i class="caret"></i></button>
        <span class="tsep"></span>
        <button class="t" aria-label="选择域"><svg><use href="#dom"/></svg></button><button class="tc" aria-label="选择域选项"><i class="caret"></i></button>
        <span class="tsep"></span>
        <button class="t" aria-label="选择相邻边界"><svg><use href="#bndsel"/></svg></button><button class="tc" aria-label="边界选项"><i class="caret"></i></button>
        <button class="t" aria-label="选择相邻域"><svg><use href="#domsel"/></svg></button><button class="tc" aria-label="域选项"><i class="caret"></i></button>
        <button class="t" aria-label="选择框"><svg><use href="#selbox"/></svg></button>
        <button class="t" aria-label="取消选择框"><svg><use href="#broom"/></svg></button>
        <span class="tsep"></span>
        <button class="t" aria-label="隐藏"><svg><use href="#hide"/></svg></button>
        <button class="t" aria-label="重置隐藏"><svg><use href="#resethide"/></svg></button>
        <button class="t" aria-label="仅查看隐藏"><svg><use href="#viewwin"/></svg></button><button class="tc" aria-label="隐藏选项"><i class="caret"></i></button>
        <span class="tsep"></span>
        <button class="t on" aria-label="显示栅格"><svg><use href="#grid"/></svg></button>
        <span class="tsep"></span>
        <button class="t" aria-label="裁剪"><svg><use href="#clip"/></svg></button>
        <button class="t" aria-label="颜色"><svg><use href="#palette"/></svg></button><button class="tc" aria-label="颜色选项"><i class="caret"></i></button>
        <span class="tsep"></span>
        <button class="t" aria-label="渲染"><svg><use href="#aperture"/></svg></button><button class="tc" aria-label="渲染选项"><i class="caret"></i></button>
        <button class="t" aria-label="图像快照"><svg><use href="#camera"/></svg></button>
        <button class="t" aria-label="打印"><svg><use href="#print"/></svg></button>
      </div>
      <svg class="plot" viewBox="0 0 1262 769" role="img" aria-label="几何图形">
        <path class="grey" d="M437 55H514.500V184A112.500 112.500 0 0 1 549.500 265V726H437z"/>
        <path class="edge" d="M437 55H514.500V184M456.500 200V76H514.500M486.500 76V164A112.500 112.500 0 0 1 549.500 265V726M437 169H456.500M456.500 200A68.500 68.500 0 0 1 494 227"/>
        <path class="axisline" d="M436.500 55V227"/>
        <path class="pale" d="M436.500 18V46"/>
        <path class="coffee" d="M437 227H494A68.500 68.500 0 0 1 505.500 265V668A68.500 68.500 0 0 1 475 726H437z"/>
        <path class="coffee-edge" d="M437 227H494A68.500 68.500 0 0 1 505.500 265V668A68.500 68.500 0 0 1 475 726"/>
        <path class="coffee-axis" d="M436.500 227V726"/>
        <path class="frame" d="M97 15H1243V726H97z
          M248 0V15M437 0V15M625 0V15M814 0V15M1004 0V15M1193 0V15
          M248 726V741M437 726V741M625 726V741M814 726V741M1004 726V741M1193 726V741
          M82 48H97M82 85H97M82 123H97M82 161H97M82 199H97M82 236H97M82 274H97M82 312H97M82 350H97M82 387H97M82 425H97M82 463H97M82 501H97M82 539H97M82 576H97M82 614H97M82 652H97M82 690H97
          M1243 48H1258M1243 85H1258M1243 123H1258M1243 161H1258M1243 199H1258M1243 236H1258M1243 274H1258M1243 312H1258M1243 350H1258M1243 387H1258M1243 425H1258M1243 463H1258M1243 501H1258M1243 539H1258M1243 576H1258M1243 614H1258M1243 652H1258M1243 690H1258"/>
        <path d="M92 311v10l5-5zM424 732h11l-5-5z"/>
        <g class="ylab">
          <text x="83" y="67">0.38</text><text x="83" y="104">0.36</text><text x="83" y="142">0.34</text><text x="83" y="180">0.32</text><text x="83" y="218">0.3</text><text x="83" y="255">0.28</text><text x="83" y="293">0.26</text><text x="83" y="331">0.24</text><text x="83" y="369">0.22</text><text x="83" y="406">0.2</text><text x="83" y="444">0.18</text><text x="83" y="482">0.16</text><text x="83" y="520">0.14</text><text x="83" y="558">0.12</text><text x="83" y="595">0.1</text><text x="83" y="633">0.08</text><text x="83" y="671">0.06</text><text x="83" y="709">0.04</text>
        </g>
        <g>
          <text x="249" y="760">-0.1</text><text x="438" y="760">0</text><text x="626" y="760">0.1</text><text x="815" y="760">0.2</text><text x="1004" y="760">0.3</text><text x="1193" y="760">0.4</text>
        </g>
        <text x="104" y="35" font-size="22">m</text><text x="1214" y="718" font-size="22">m</text>
        <text x="440" y="722" fill="#999">r=0</text>
        <use href="#logo" x="1188" y="23" width="44" height="44"/>
      </svg>
    </section>

    <section class="panel messages">
      <div class="mtabs">
        <button class="on">消息<svg viewBox="0 0 20 20"><path d="m2 2 16 16M18 2 2 18"/></svg></button><button>进度</button><button>日志</button>
        <span class="fill"></span>
        <span class="phead mini"><button class="pm" aria-label="面板菜单"><i class="caret"></i></button><button class="pm" aria-label="固定"><svg class="pinicon"><use href="#pin"/></svg></button></span>
      </div>
      <div class="mtools">
        <button aria-label="清除"><svg><use href="#broomonly"/></svg></button>
        <button class="on" aria-label="弹出消息"><svg><use href="#mail"/></svg></button>
      </div>
      <div class="log">
        <div class="logtext"><p>[2024年4月23日 下午6:19] 定型几何包含 4 个域、25 个边界、21 个顶点和 1 个有限空域。</p><p>[2024年4月23日 下午6:23] 定型几何包含 5 个域、25 个边界和 21 个顶点。</p></div>
        <div class="logv"><span><i class="chev up"></i></span><span><i class="chev down"></i></span></div>
        <div class="logh"><span class="hb"><i class="chev prev"></i></span><span class="hthumb"></span><span class="htrack"></span><span class="hb"><i class="chev fwd"></i></span></div>
        <div class="corner"></div>
      </div>
    </section>
  </div>
</main>
<footer class="status">1.6 GB | 1.9 GB</footer>
</body>
</html>
```
FILE: styles.css
```css
:root {
  --bg: #fafbff;
  --line: #d5d6da;
  --blue: #348dcd;
  --hot: #99d1fb;
}
*, *::before { box-sizing: border-box; }
body {
  margin: 0;
  min-height: 100vh;
  display: flex;
  flex-direction: column;
  background: var(--bg);
  color: #000;
  font: 24px/32px "Open Sans", "Noto Sans CJK SC", sans-serif;
}
button, input, select { font: inherit; color: inherit; }
button { margin: 0; padding: 0; border: 0; background: none; }
h1, h2, h3, p, ul { margin: 0; padding: 0; font-weight: 400; }
svg { display: block; flex: none; }
.sprite { position: absolute; width: 0; height: 0; }
.symbols { display: none; }
.caret {
  display: block;
  width: 0;
  border: 7px solid transparent;
  border-top: 9px solid #000;
  border-bottom: 0;
}

/* title bar */
.titlebar { display: flex; align-items: center; height: 32px; background: #fff; padding-bottom: 2px; }
.app-logo { width: 32px; height: 30px; margin: 0 18px 0 2px; }
.qsep { width: 2px; height: 24px; background: #999; align-self: flex-start; margin: 0 6px 0 0; }
.q { width: 48px; display: flex; justify-content: center; }
.q svg { width: 30px; height: 30px; }
.q.narrow { width: 32px; }
.qc { width: 34px; display: flex; justify-content: center; }
.qc.small { width: 22px; margin-right: 8px; }
.qc .caret { border-width: 7px 5px 0; }
.qc.dim .caret { border-top-color: #b4b4b4; }
.doc-title { flex: 1; font-size: 25px; line-height: 24px; font-family: "Noto Sans", "Noto Sans CJK SC", sans-serif; text-align: center; margin-left: 194px; align-self: flex-start; white-space: nowrap; }
.winbtns { display: flex; align-self: flex-start; }
.winbtns button { width: 92px; height: 24px; display: flex; justify-content: center; }
.winbtns svg { width: 24px; height: 24px; fill: none; stroke: #000; stroke-width: 2; }

/* ribbon */
.ribbon { margin: 6px 0 8px 6px; border: solid var(--line); border-width: 0 2px 2px; height: 230px; }
.tabs { display: flex; align-items: flex-start; height: 48px; background: #ecedef; }
.tabs button { height: 46px; margin-top: 2px; padding: 0 18px; line-height: 46px; }
.tabs .file { width: 110px; height: 44px; margin-right: 2px; background: #358bcb; color: #fff; }
.tabs .on { background: var(--bg); color: var(--blue); }
.tabs .help { margin: 11px 11px 0 auto; padding: 0; width: 22px; height: 22px; background: var(--blue); color: #fff; font-size: 18px; line-height: 22px; }
.groups { display: flex; height: 180px; }
.group {
  padding: 6px 12px 0;
  background: linear-gradient(#dddee1, #dddee1) right 16px / 2px 150px no-repeat;
}
.btns { display: flex; height: 132px; }
.rb { display: flex; flex-direction: column; align-items: center; min-width: 88px; padding: 0 4px; border: 2px solid transparent; line-height: 30px; white-space: nowrap; }
.rb .ic { height: 70px; display: flex; align-items: center; align-self: stretch; justify-content: center; margin: 0 -4px; }
.rb svg { width: 60px; height: 64px; }
.rb .caret { margin-top: 8px; border-width: 8px 5px 0; }
.rb.on { border-color: var(--hot); background: #d8ebfc; }
.rb.on .ic { background: #b1d9fb; box-shadow: 0 1px var(--hot); }
.rb:disabled, .stack button:disabled { color: #b3b3b5; }
.rb:disabled svg, .stack svg { opacity: .4; }
:disabled .caret { border-top-color: #b3b3b5; }
.stack { width: 148px; padding-left: 4px; }
.stack button { display: flex; align-items: center; height: 44px; gap: 6px; padding-bottom: 1px; }
.stack svg { width: 32px; height: 32px; }
.stack .caret { border-width: 7px 5px 0; margin-left: 2px; }
.gl { height: 40px; line-height: 40px; text-align: center; color: #77787a; padding-top: 6px; }

/* panels */
.work { flex: 1; display: grid; grid-template-columns: 556fr 708fr 1266fr; gap: 10px; padding-left: 6px; }
.panel { border: 2px solid var(--line); min-width: 0; }
.settings { border-color: #99d1fb; }
.phead { display: flex; align-items: center; height: 60px; padding: 10px 3px 0 14px; }
.phead h2 { flex: 1; font-size: 43px; line-height: 50px; font-weight: 300; color: #2b579a; }
.settings h2, .subtitle { color: #1590f0; }
.pm { width: 28px; height: 24px; display: flex; align-items: center; justify-content: center; color: #555; margin-bottom: 4px; }
.pm + .pm { width: 24px; margin-left: 3px; }
.settings .pm { color: var(--blue); }
.pm .caret { border-width: 8px 9px 0; border-top-color: currentColor; }
.pinicon { width: 16px; height: 24px; }
.tools { display: flex; padding-left: 6px; height: 41px; }
.t { width: 44px; height: 40px; display: flex; align-items: center; justify-content: center; }
.t svg { width: 32px; height: 32px; }
.tc { width: 27px; height: 40px; margin-right: 8px; display: flex; align-items: center; justify-content: center; }
.tc .caret { border-width: 9px 7px 0; }
.t.on { width: 40px; margin: 0 2px; }
.t.on, .mtools .on { background: #9fd1fb; border: 2px solid #1590f5; border-radius: 4px; }
.tsep { width: 2px; height: 32px; background: var(--line); margin: 4px 6px 0 9px; }

/* model builder */
.filter { display: flex; gap: 18px; padding: 0 10px; margin: 12px 0; }
.filter input { flex: 1; min-width: 0; height: 41px; }
.filter button { width: 36px; display: flex; align-items: center; }
.filter svg { width: 32px; height: 32px; }
input[type="text"] { border: 3px solid var(--line); background: #fff; padding: 0 4px 1px; outline: 0; }
.filter input[type="text"] { padding: 0 1px; }
input::placeholder { color: #9b9b9b; opacity: 1; }
.treebox { display: flex; margin: 0 10px 14px; border: 2px solid var(--line); background: #fff; }
.tree { flex: 1; list-style: none; min-width: 0; }
.tree li { display: flex; align-items: center; height: 36px; white-space: pre; }
.tree em { font-family: "Noto Sans", sans-serif; font-size: 26px; margin-left: 3px; }
.tree svg { width: 32px; height: 32px; margin-right: 12px; }
.tree .l1 { padding-left: 80px; }
.tree .l2 { padding-left: 120px; }
.tree .l3 { padding-left: 160px; }
.tree .sel { background: #dadadc; }
.opened::before, .closed::before {
  content: "";
  width: 13px;
  height: 13px;
  margin: 0 14px 0 -27px;
  border: solid #111;
  border-width: 0 3px 3px 0;
  transform: translateY(-3px) rotate(45deg);
}
.closed::before { border-color: #777; transform: translateX(-4px) rotate(-45deg); }
.vbar { width: 34px; display: flex; flex-direction: column; background: #fff; border: solid #f5f5f5; border-width: 0 1px; }
.sb, .logv span, .hb { display: flex; align-items: center; justify-content: center; height: 34px; background: #f7f7f8; }
.track.before { flex: 250; }
.thumb { flex: 519; background: #e8e8e9; }
.track.after { flex: 135; }
.chev { width: 11px; height: 11px; border: solid #cbccce; border-width: 2px 0 0 2px; }
.chev.up { transform: translateY(3px) rotate(45deg); }
.chev.down { transform: translateY(-3px) rotate(225deg); }
.chev.prev { transform: rotate(-45deg); }
.chev.fwd { transform: rotate(135deg); }

/* settings */
.subtitle { margin: 7px 0 0 12px; font-size: 31px; line-height: 38px; padding-bottom: 2px; font-weight: 300; }
.row { display: flex; align-items: center; padding: 0 10px; }
.row label { width: 74px; }
.labelrow { margin-top: 22px; height: 46px; }
.row input { flex: 1; min-width: 0; height: 39px; }
.sq { width: 42px; height: 46px; margin-left: 16px; border: 2px solid #cdced2; border-radius: 6px; background: #ededee; display: flex; align-items: center; justify-content: center; }
.sq svg { width: 28px; height: 28px; }
.sq:disabled { border-color: #e7e8eb; background: #f4f5f8; }
.sq:disabled svg { opacity: .45; }
.sec { display: flex; align-items: center; width: 100%; height: 52px; margin-top: 18px; padding: 0 0 2px 10px; background: #dfe8f5; font-size: 27px; }
.sec svg { width: 18px; height: 20px; margin-right: 24px; }
select {
  flex: 1;
  min-width: 0;
  height: 42px;
  appearance: none;
  border: 2px solid #d0d1d4;
  border-radius: 5px;
  padding: 0 24px;
  background: url("data:image/svg+xml,%3Csvg xmlns='http://www.w3.org/2000/svg' viewBox='0 0 14 9'%3E%3Cpath d='M0 0h14L7 9z'/%3E%3C/svg%3E") right 12px center / 14px 9px no-repeat, linear-gradient(#f1f1f2, #e6e6e7);
}
.selrow { margin-top: 18px; }
.listrow { margin-top: 12px; align-items: flex-start; padding-left: 9px; }
.activate { width: 79px; height: 80px; border: 2px solid #1590f5; border-radius: 6px; background: #9fd1fb; display: flex; align-items: center; justify-content: center; }
.activate svg { width: 64px; height: 64px; }
.list { flex: 1; height: 240px; margin: 0 24px 0 14px; padding: 6px 12px; border: 2px solid var(--line); border-bottom-width: 6px; }
.listtools { display: grid; grid-template-columns: 32px 32px; gap: 8px 24px; }
.listtools svg { width: 32px; height: 32px; }
.listrow + .sec { margin-top: 22px; }
.sec.next { margin-top: 4px; }
.temp { margin-top: 17px; height: 36px; }
.trow { margin-top: 8px; height: 46px; }
.row.trow label { width: 40px; }
.valrow { margin-top: 12px; padding-left: 50px; }
.valrow span { width: 35px; text-align: right; }

/* graphics */
.right { display: flex; flex-direction: column; gap: 10px; min-width: 0; }
.right .phead { padding-right: 5px; }
.graphics { flex: 1; display: flex; flex-direction: column; }
.gtools { flex-wrap: wrap; height: auto; margin: 1px 0 6px; }
.plot { width: 100%; height: auto; background: #fff; font-family: "DejaVu Sans", sans-serif; font-size: 24px; }
.ylab { text-anchor: end; }
.grey { fill: #c8c8c8; }
.edge, .frame, .axisline, .pale, .coffee-edge, .coffee-axis { fill: none; }
.edge { stroke: #222; stroke-width: 1; }
.axisline { stroke: #333; stroke-width: 1; stroke-dasharray: 14 1; }
.pale { stroke: #ccc; }
.coffee { fill: #b3b2f2; }
.coffee-edge { stroke: #00f; stroke-width: 2; }
.coffee-axis { stroke: #1a1ae8; stroke-dasharray: 14 1; }
.frame { stroke: #7c7c7c; stroke-width: 2; }

/* messages */
.messages { height: 230px; }
.mtabs { display: flex; align-items: flex-end; height: 59px; border-bottom: 2px solid var(--line); padding-left: 8px; }
.mtabs > button { height: 47px; width: 70px; margin-left: 16px; background: #ebecec; font-size: 27px; display: flex; align-items: center; justify-content: center; }
.mtabs > .on { width: 114px; height: 50px; margin: 0 0 -2px; gap: 15px; padding-right: 4px; border: 2px solid var(--line); border-bottom: 0; background: var(--bg); color: #2b579a; }
.mtabs button > svg:not(.pinicon) { width: 20px; height: 20px; stroke: #cdd2de; stroke-width: 2.5; }
.fill { flex: 1; }
.mini { height: 36px; padding-top: 0; }
.mtools { display: flex; gap: 4px; margin: 11px 0 6px; padding-left: 8px; }
.mtools button { width: 40px; height: 40px; display: flex; align-items: center; justify-content: center; }
.mtools svg { width: 32px; height: 32px; }
.log { display: grid; grid-template: 64px 34px / minmax(0, 1fr) 34px; margin: 0 8px; border: 2px solid var(--line); }
.logtext { padding: 2px 5px 0; white-space: nowrap; }
.logtext p { line-height: 31px; }
.logv span { height: 32px; }
.logh { display: flex; background: #fdfdfe; }
.hb { width: 34px; }
.hthumb { flex: 1012; background: #e4e5e7; }
.htrack { flex: 128; }
.corner { background: #efefef; }

.status { height: 57px; padding: 24px 0 0 16px; text-align: center; line-height: 32px; }
```
